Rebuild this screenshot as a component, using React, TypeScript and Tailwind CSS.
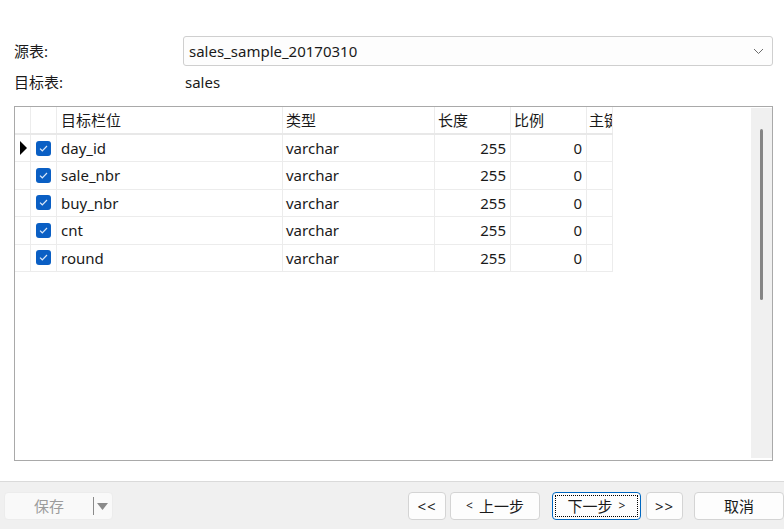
import type { ReactElement } from 'react';

const font = { fontFamily: '"Noto Sans", "Noto Sans CJK SC", sans-serif' };

interface FieldRow {
	readonly name: string;
	readonly type: string;
	readonly length: string;
	readonly scale: string;
}

const rows: FieldRow[] = [
	{ name: 'day_id', type: 'varchar', length: '255', scale: '0' },
	{ name: 'sale_nbr', type: 'varchar', length: '255', scale: '0' },
	{ name: 'buy_nbr', type: 'varchar', length: '255', scale: '0' },
	{ name: 'cnt', type: 'varchar', length: '255', scale: '0' },
	{ name: 'round', type: 'varchar', length: '255', scale: '0' },
];

function CheckBox(): ReactElement {
	return (
		<span className="flex h-[15px] w-[15px] items-center justify-center rounded-[3px] bg-[#0a5fc4]">
			<svg width="9" height="7" viewBox="0 0 9 7" fill="none">
				<path d="M1 3.6 3.3 5.8 8 1" stroke="#dbe8f8" strokeWidth="1.2" />
			</svg>
		</span>
	);
}

function Cell({
	w,
	children,
	className = '',
}: {
	w: string;
	children?: React.ReactNode;
	className?: string;
}): ReactElement {
	return (
		<div className={`flex h-full shrink-0 items-center border-r border-[#ececec] ${w} ${className}`}>
			{children}
		</div>
	);
}

function GridHeader(): ReactElement {
	return (
		<div className="flex h-[28px] w-fit border-b-2 border-[#e8e8e8] text-[15px] text-[#1a1a1a]">
			<Cell w="w-[16px]" />
			<Cell w="w-[26px]" />
			<Cell w="w-[226px]" className="pl-[4px]">目标栏位</Cell>
			<Cell w="w-[152px]" className="pl-[3px]">类型</Cell>
			<Cell w="w-[76px]" className="pl-[3px]">长度</Cell>
			<Cell w="w-[76px]" className="pl-[3px]">比例</Cell>
			<Cell w="w-[26px]" className="overflow-hidden whitespace-nowrap pl-[2px]">主键</Cell>
		</div>
	);
}

function GridRow({ row, current }: { row: FieldRow; current: boolean }): ReactElement {
	return (
		<div className="flex h-[27.4px] w-fit border-b border-[#ececec] text-[15px] text-[#1a1a1a]">
			<Cell w="w-[16px]" className="justify-center">
				{current ? (
					<svg width="8" height="14" viewBox="0 0 8 14">
						<path d="M1 0 8 7 1 14Z" fill="#000" />
					</svg>
				) : null}
			</Cell>
			<Cell w="w-[26px]" className="justify-center">
				<CheckBox />
			</Cell>
			<Cell w="w-[226px]" className="pl-[4px]">{row.name}</Cell>
			<Cell w="w-[152px]" className="pl-[3px]">{row.type}</Cell>
			<Cell w="w-[76px]" className="justify-end pr-[4px]">{row.length}</Cell>
			<Cell w="w-[76px]" className="justify-end pr-[4px]">{row.scale}</Cell>
			<Cell w="w-[26px]" />
		</div>
	);
}

function Btn({
	children,
	w,
	focused = false,
	className = '',
}: {
	children: React.ReactNode;
	w: string;
	focused?: boolean;
	className?: string;
}): ReactElement {
	return (
		<button
			type="button"
			className={`flex h-[28px] shrink-0 items-center justify-center rounded-[4px] border bg-[#fdfdfd] text-[15px] text-[#1a1a1a] ${w} ${
				focused ? 'border-[#0067c0] p-[2px]' : 'border-[#d4d4d4]'
			} ${className}`}
		>
			{focused ? (
				<span className="flex h-full w-full items-center justify-center border border-dotted border-black">
					{children}
				</span>
			) : (
				children
			)}
		</button>
	);
}

export default function App(): ReactElement {
	return (
		<div className="flex h-[529px] w-[784px] flex-col overflow-hidden bg-white" style={font}>
			<div className="flex flex-1 flex-col pl-[14px] pr-[11px] pt-[36px]">
				<div className="flex h-[30px] items-center">
					<span className="w-[169px] text-[15px] text-[#1a1a1a]">源表:</span>
					<div className="flex h-full flex-1 items-center justify-between rounded-[3px] border border-[#cfcfcf] bg-[#fdfdfd] pl-[5px] pr-[8px] text-[15px] text-[#1a1a1a]">
						<span>sales_sample_20170310</span>
						<svg width="11" height="7" viewBox="0 0 11 7" fill="none">
							<path d="M1 1 5.5 5.5 10 1" stroke="#6b6b6b" strokeWidth="1" />
						</svg>
					</div>
				</div>
				<div className="flex h-[32px] items-center">
					<span className="w-[171px] text-[15px] text-[#1a1a1a]">目标表:</span>
					<span className="text-[15px] text-[#1a1a1a]">sales</span>
				</div>
				<div className="mt-[8px] flex h-[355px] border border-[#a9a9a9]">
					<div className="flex-1">
						<GridHeader />
						{rows.map((row, i) => (
							<GridRow key={row.name} row={row} current={i === 0} />
						))}
					</div>
					<div className="mb-[2px] mt-[1px] flex w-[21px] justify-center bg-[#f0f0f0] pt-[21px]">
						<div className="h-[171px] w-[3px] rounded-full bg-[#858585]" />
					</div>
				</div>
			</div>
			<div className="flex h-[48px] shrink-0 items-start border-t border-[#dadada] bg-[#f0f0f0] pt-[10px]">
				<div className="ml-[4px] flex h-[28px] w-[109px] items-center rounded-[4px] border border-[#ececec] bg-[#f9f9f9]">
					<span className="flex w-[88px] justify-center text-[15px] text-[#9c9c9c]">保存</span>
					<span className="h-[18px] w-px bg-[#8a8a8a]" />
					<svg className="ml-[3px]" width="11" height="7" viewBox="0 0 11 7">
						<path d="M0 0H11L5.5 7Z" fill="#8a8a8a" />
					</svg>
				</div>
				<div className="ml-auto flex">
					<Btn w="w-[38px]" className="text-[12px] tracking-[1px]">{'<<'}</Btn>
					<Btn w="w-[90px]" className="ml-[4px]">
						<span className="mr-[6px] text-[12px]">{'<'}</span>上一步
					</Btn>
					<Btn w="w-[89px]" focused className="ml-[12px]">
						下一步<span className="ml-[6px] text-[12px]">{'>'}</span>
					</Btn>
					<Btn w="w-[37px]" className="ml-[5px] text-[12px] tracking-[1px]">{'>>'}</Btn>
					<Btn w="w-[90px]" className="ml-[11px]">取消</Btn>
				</div>
			</div>
		</div>
	);
}
